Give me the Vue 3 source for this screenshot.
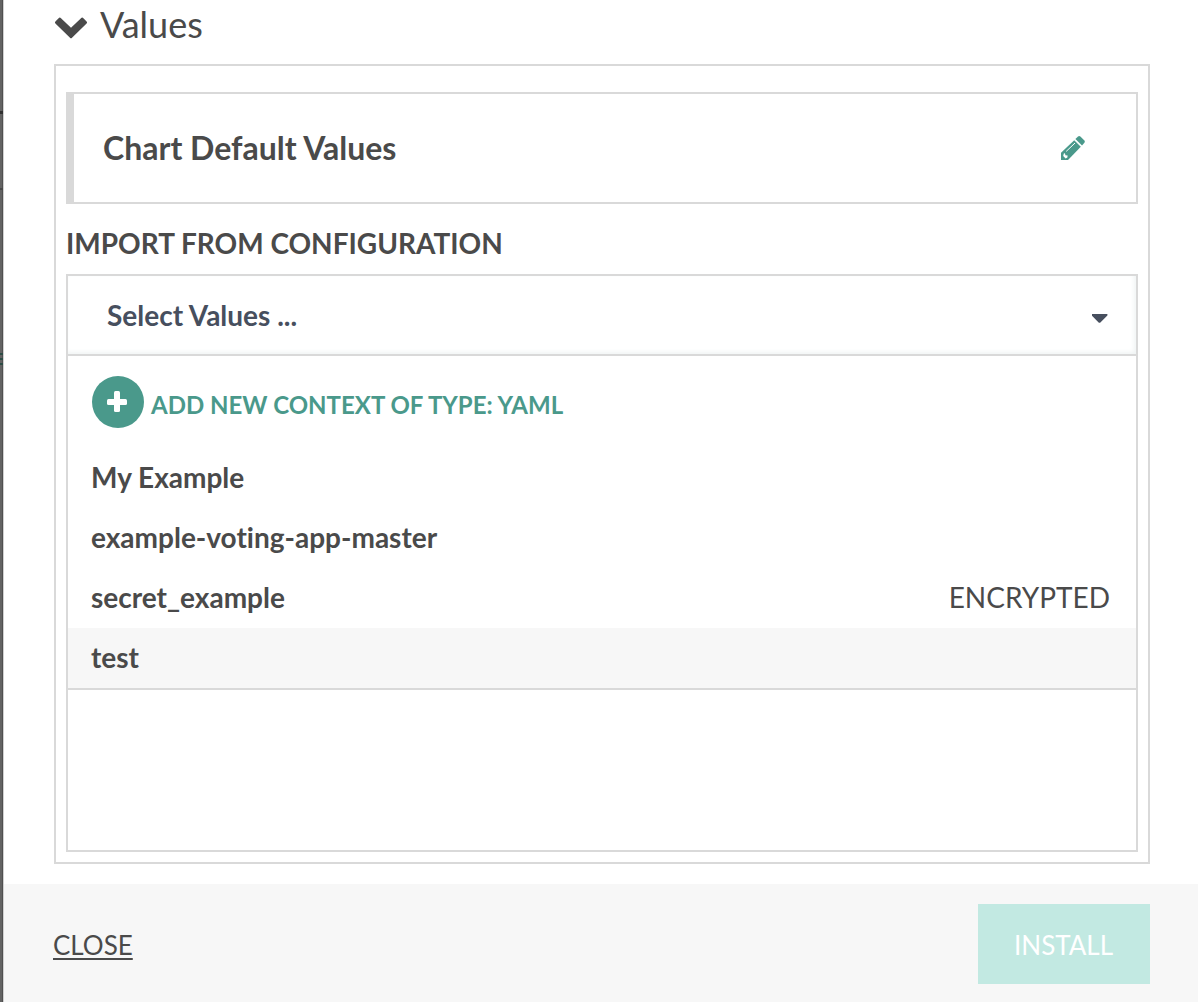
<script setup>
import { ref } from 'vue'

const contexts = [
  { name: 'My Example' },
  { name: 'example-voting-app-master' },
  { name: 'secret_example', encrypted: true },
  { name: 'test' },
]
const selected = ref('')
const highlighted = ref('test')
</script>

<template>
  <div class="page">
    <div class="backdrop" aria-hidden="true">
      <i class="line"></i>
      <i class="line thin"></i>
      <i class="line green"></i>
    </div>
    <main class="dialog">
      <section class="content">
        <h2 class="title">
          <button type="button" class="toggle" aria-expanded="true">
            <svg class="chevron" viewBox="0 0 34 22" aria-hidden="true">
              <path d="M1.400 4.400 4.600 1.200Q5.800 0 7 1.200L17 10.800 27 1.200Q28.200 0 29.400 1.200L32.600 4.400Q33.600 5.400 32.600 6.400L18 20.800Q17 21.800 16 20.800L1.400 6.400Q.400 5.400 1.400 4.400Z" />
            </svg>
            <span>Values</span>
          </button>
        </h2>

        <div class="frame">
          <div class="card">
            <h3>Chart Default Values</h3>
            <button type="button" class="edit" aria-label="Edit chart default values">
              <svg viewBox="0 0 26 26" aria-hidden="true">
                <path class="fill" d="M1 25V17.800L14.200 5.200 20.800 11.800 8 25Z" />
                <path class="fill" d="M15.400 4 18 1.400Q19.200.400 20.400 1.400L24.400 5.400Q25.400 6.600 24.400 7.800L22 10.600Z" />
                <path class="gap" d="M6.200 16.400 15 8" />
                <path class="hole" d="M3.800 18.600 5 18.200 5.400 20.200 7.600 20.600 7.400 22.400 5.600 23.400 3.200 21Z" />
              </svg>
            </button>
          </div>

          <label class="label" for="context">IMPORT FROM CONFIGURATION</label>
          <div class="picker">
            <div class="head">
              <select id="context" v-model="selected">
                <option value="">Select Values ...</option>
                <option v-for="c in contexts" :key="c.name" :value="c.name">{{ c.name }}</option>
              </select>
              <svg class="caret" viewBox="0 0 16 9" aria-hidden="true">
                <path d="M0 0H15.400V1.400L8.400 8.400Q7.400 9.200 6.600 8.400L0 1.800Z" />
              </svg>
            </div>
            <div class="menu">
              <button type="button" class="add">
                <span class="plus">
                  <svg viewBox="0 0 22 22" aria-hidden="true">
                    <rect x="7" y="0" width="6" height="21" rx="1.500" />
                    <rect x="0" y="8" width="20" height="6" rx="1.500" />
                  </svg>
                </span>
                <span class="add-text">ADD NEW CONTEXT OF TYPE: YAML</span>
              </button>
              <button
                v-for="c in contexts"
                :key="c.name"
                type="button"
                class="item"
                :class="{ active: highlighted === c.name }"
                @mouseenter="highlighted = c.name"
                @click="selected = c.name"
              >
                <span>{{ c.name }}</span>
                <span v-if="c.encrypted" class="tag">ENCRYPTED</span>
              </button>
            </div>
            <div class="preview"></div>
          </div>
        </div>
      </section>

      <footer class="footer">
        <a href="#" class="close">CLOSE</a>
        <button type="button" class="install" disabled>INSTALL</button>
      </footer>
    </main>
  </div>
</template>

<style>
body {
  margin: 0;
  background: #fff;
}
</style>

<style scoped>
* {
  box-sizing: border-box;
}
.page {
  display: flex;
  min-height: 100vh;
  font-family: Lato, "Liberation Sans", sans-serif;
  font-variant-ligatures: none;
  color: #4a4a4a;
}
button {
  font: inherit;
  font-variant-ligatures: none;
  color: inherit;
  background: none;
  border: 0;
  padding: 0;
  text-align: left;
}
svg {
  display: block;
}
.backdrop {
  flex: none;
  display: flex;
  flex-direction: column;
  width: 4px;
  background: #636363;
  border-right: 1px solid #d0d0d0;
  box-shadow: inset -1px 0 #505050;
}
.line {
  flex: none;
  height: 3px;
  margin-top: 111px;
  background: #303030;
}
.line.thin {
  height: 2px;
  margin-top: 74px;
  background: #484848;
}
.line.green {
  height: 12px;
  margin-top: 163px;
  background: linear-gradient(#2c4c45 2px, transparent 2px 5px, #2c4c45 5px 7px, transparent 7px 10px, #2c4c45 10px);
}
.dialog {
  flex: 1;
  min-width: 0;
  display: flex;
  flex-direction: column;
}
.content {
  flex: 1;
  padding: 0 48px 20px 50px;
}
.title {
  margin: 0;
  font-size: 36px;
  font-weight: 400;
  line-height: 48px;
  padding-bottom: 16px;
}
.toggle {
  display: flex;
  align-items: center;
  gap: 12px;
}
.chevron {
  width: 34px;
  height: 22px;
  margin-top: 8px;
  fill: #4a4a4a;
}
.frame {
  padding: 26px 10px 10px;
  border: 2px solid #d9d9d9;
}
.card {
  display: flex;
  align-items: center;
  justify-content: space-between;
  height: 112px;
  padding: 0 50px 0 29px;
  border: 2px solid #d9d9d9;
  border-left-width: 8px;
}
h3 {
  margin: 0;
  font-size: 32px;
  font-weight: 700;
  line-height: 40px;
}
.edit svg {
  width: 26px;
  height: 26px;
}
.fill {
  fill: #4a998b;
}
.gap {
  stroke: #fff;
  stroke-width: 1;
}
.hole {
  fill: #fff;
}
.label {
  display: block;
  padding: 19px 0 11px;
  font-size: 28px;
  font-weight: 700;
  line-height: 40px;
}
.picker {
  border: 2px solid #d9d9d9;
}
.head {
  display: grid;
  align-items: center;
  border-bottom: 2px solid #d9d9d9;
  box-shadow: inset -2px -2px 4px #f0f4f4;
}
.head > * {
  grid-area: 1 / 1;
}
select {
  appearance: none;
  width: 100%;
  height: 78px;
  padding: 0 39px;
  border: 0;
  background: none;
  font: 700 28px/40px Lato, "Liberation Sans", sans-serif;
  color: #474f5e;
}
.caret {
  justify-self: end;
  width: 16px;
  height: 9px;
  margin: 6px 28px 0 0;
  fill: #474f5e;
  pointer-events: none;
}
.menu {
  border-bottom: 2px solid #d9d9d9;
}
.add {
  display: flex;
  align-items: center;
  gap: 7px;
  width: 100%;
  padding: 20px 24px;
  color: #4a998b;
  font-size: 24px;
  font-weight: 700;
  line-height: 32px;
}
.plus {
  display: grid;
  place-items: center;
  width: 52px;
  height: 52px;
  border-radius: 50%;
  background: #4a998b;
}
.plus svg {
  width: 22px;
  height: 22px;
  fill: #fff;
}
.add-text {
  padding-top: 6px;
}
.item {
  display: flex;
  align-items: center;
  justify-content: space-between;
  width: 100%;
  height: 60px;
  padding: 0 26px 2px 23px;
  font-size: 28px;
  font-weight: 700;
  line-height: 40px;
}
.item.active {
  background: #f7f7f7;
}
.tag {
  font-weight: 400;
}
.preview {
  height: 160px;
}
.footer {
  display: flex;
  align-items: center;
  justify-content: space-between;
  padding: 20px 48px 18px 49px;
  background: #f7f7f7;
  font-size: 26px;
  line-height: 40px;
}
.close {
  padding-top: 2px;
  color: #4a4a4a;
  text-underline-offset: 3px;
  text-decoration-thickness: 2px;
}
.install {
  min-width: 172px;
  padding: 21px 36px 19px;
  background: #c2e9e2;
  color: #fff;
}
</style>
